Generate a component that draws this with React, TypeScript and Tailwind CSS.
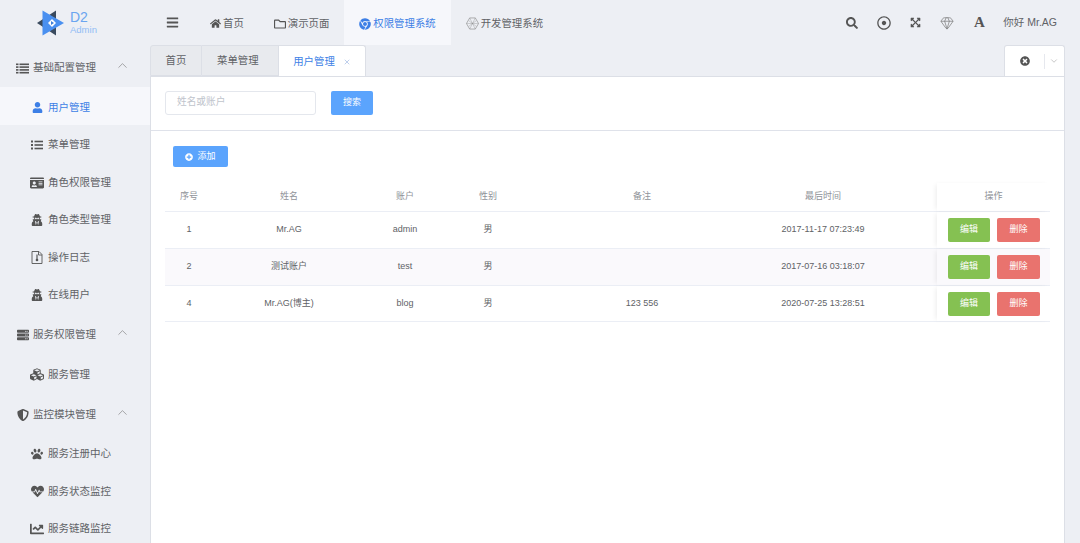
import { ChevronDown, ChevronUp, Gem, X } from "lucide-react"
import {
  FaBars,
  FaChartLine,
  FaChrome,
  FaCubes,
  FaExpandArrowsAlt,
  FaHeartbeat,
  FaHome,
  FaIdCard,
  FaPaw,
  FaPlusCircle,
  FaRegDotCircle,
  FaRegFolder,
  FaSearch,
  FaServer,
  FaShieldAlt,
  FaTimesCircle,
  FaUser,
  FaUserSecret,
} from "react-icons/fa"
import type { ReactNode } from "react"

const rowGrid = "grid grid-cols-[48px_152px_80px_86px_222px_140px_44px_113px] items-center text-center"

const rows = [
  { id: "1", name: "Mr.AG", account: "admin", sex: "男", note: "", time: "2017-11-17 07:23:49", h: "h-[37px]" },
  { id: "2", name: "测试账户", account: "test", sex: "男", note: "", time: "2017-07-16 03:18:07", h: "h-[37px] bg-[#faf9fc]" },
  { id: "4", name: "Mr.AG(博主)", account: "blog", sex: "男", note: "123 556", time: "2020-07-25 13:28:51", h: "h-[36px]" },
]

const Logo = () => (
  <div className="flex w-[150px] items-center gap-[5px] pl-[37px]">
    <svg width="28" height="26" viewBox="0 0 28 26">
      <path d="M0 13 L19 0.5 L19 25.5 Z" fill="#3a4a5e" />
      <path d="M5.5 0.5 L27 13 L5.5 25.5 Z" fill="#4a90f0" />
      <path d="M11 13 L15 9 L19 13 L15 17 Z" fill="#fff" />
      <path d="M14 11 L17 13 L14 15 Z" fill="#3f7fd8" />
    </svg>
    <div className="flex flex-col leading-none text-[#6aa5f0]">
      <span className="text-[14px] leading-[14px]">D2</span>
      <span className="text-[9.5px] leading-[12px] text-[#92bdf4]">Admin</span>
    </div>
  </div>
)

const DevIcon = () => (
  <svg width="13" height="13" viewBox="0 0 14 14" fill="none" stroke="#8a8a8a" strokeWidth="0.7">
    <path d="M4 1 H10 L13.5 7 L10 13 H4 L0.5 7 Z" />
    <path d="M4 1 L10 13 M10 1 L4 13 M0.5 7 H13.5 M3 4 L11 10 M11 4 L3 10" strokeWidth="0.4" />
  </svg>
)

const FileIcon = () => (
  <svg width="12" height="13" viewBox="0 0 12 13" fill="none" stroke="#555" strokeWidth="0.9">
    <path d="M1 0.5 H8 L11 3.5 V12.5 H1 Z" />
    <path d="M7.5 0.5 V4 H11" />
    <path d="M6 3.5 V8" strokeWidth="1.2" />
    <circle cx="6" cy="9" r="1.3" fill="#555" stroke="none" />
  </svg>
)

// four tight rows, the group heading list
const ThListIcon = () => (
  <svg width="13" height="11" viewBox="0 0 13 11" fill="#555">
    <rect x="0" y="0.5" width="2.5" height="1.6" />
    <rect x="3.5" y="0.5" width="9.5" height="1.6" />
    <rect x="0" y="3.3" width="2.5" height="1.6" />
    <rect x="3.5" y="3.3" width="9.5" height="1.6" />
    <rect x="0" y="6.1" width="2.5" height="1.6" />
    <rect x="3.5" y="6.1" width="9.5" height="1.6" />
    <rect x="0" y="8.9" width="2.5" height="1.6" />
    <rect x="3.5" y="8.9" width="9.5" height="1.6" />
  </svg>
)

const ListIcon = () => (
  <svg width="12" height="10" viewBox="0 0 12 10" fill="#555">
    <rect x="0" y="0.5" width="2" height="2" />
    <rect x="3.5" y="0.7" width="8.5" height="1.6" />
    <rect x="0" y="4" width="2" height="2" />
    <rect x="3.5" y="4.2" width="8.5" height="1.6" />
    <rect x="0" y="7.5" width="2" height="2" />
    <rect x="3.5" y="7.7" width="8.5" height="1.6" />
  </svg>
)

const TopItem = ({ icon, label, active }: { icon: ReactNode; label: string; active?: boolean }) => (
  <div
    className={`flex h-[45px] items-center gap-[2px] px-[15px] pt-[2px] text-[10.4px] ${
      active ? "bg-[#f6f7fb] text-[#3d7fe6]" : "text-[#606266]"
    }`}
  >
    {icon}
    <span>{label}</span>
  </div>
)

const Group = ({ icon, label, first }: { icon: ReactNode; label: string; first?: boolean }) => (
  <div
    className={`flex h-[40px] items-center pl-[16px] pr-[20px] pt-[2px] text-[10.5px] text-[#606266] ${
      first ? "" : "mt-[2px]"
    }`}
  >
    <span className="flex w-[13px] justify-center text-[#555]">{icon}</span>
    <span className="ml-[4px] flex-1">{label}</span>
    <ChevronUp size={15} strokeWidth={1} className="-mt-[5px] text-[#777]" />
  </div>
)

const Item = ({ icon, label, active }: { icon: ReactNode; label: string; active?: boolean }) => (
  <div
    className={`flex h-[37.5px] items-center pl-[30px] pt-[4px] text-[10.5px] ${
      active ? "bg-[#f6f7fb] text-[#3d7fe6]" : "text-[#606266]"
    }`}
  >
    <span className={`flex w-[14px] justify-center ${active ? "text-[#3d7fe6]" : "text-[#555]"}`}>{icon}</span>
    <span className="ml-[4px]">{label}</span>
  </div>
)

const Sidebar = () => (
  <aside className="w-[150px] shrink-0 pt-[2px]">
    <Group first icon={<ThListIcon />} label="基础配置管理" />
    <Item active icon={<FaUser size={11} />} label="用户管理" />
    <Item icon={<ListIcon />} label="菜单管理" />
    <Item icon={<FaIdCard size={14} />} label="角色权限管理" />
    <Item icon={<FaUserSecret size={12} />} label="角色类型管理" />
    <Item icon={<FileIcon />} label="操作日志" />
    <Item icon={<FaUserSecret size={12} />} label="在线用户" />
    <Group icon={<FaServer size={12} />} label="服务权限管理" />
    <Item icon={<FaCubes size={15} />} label="服务管理" />
    <Group icon={<FaShieldAlt size={12} />} label="监控模块管理" />
    <Item icon={<FaPaw size={12} />} label="服务注册中心" />
    <Item icon={<FaHeartbeat size={13} />} label="服务状态监控" />
    <Item icon={<FaChartLine size={14} />} label="服务链路监控" />
  </aside>
)

const Tabs = () => (
  <div className="flex h-[31px] text-[10.4px] text-[#606266]">
    <div className="flex h-[31px] w-[52px] items-center justify-center rounded-tl-[3px] border border-[#dcdfe6] bg-[#e8eaee] pt-[1px]">
      首页
    </div>
    <div className="flex h-[31px] w-[77px] items-center border-y border-r border-[#dcdfe6] bg-[#e8eaee] pl-[15px] pt-[1px]">
      菜单管理
    </div>
    <div className="flex h-[31px] w-[87px] items-center justify-center gap-[8px] rounded-tr-[3px] border-t border-r border-[#dcdfe6] bg-white pt-[1px] text-[#3d7fe6]">
      <span>用户管理</span>
      <X size={8} strokeWidth={1.5} className="text-[#7f9fd8]" />
    </div>
    <div className="ml-auto flex h-[31px] w-[61px] items-center rounded-t-[3px] border-x border-t border-[#dcdfe6] bg-white">
      <div className="flex h-[15px] w-[40px] items-center justify-center border-r border-[#e6e8ee] text-[#555]">
        <FaTimesCircle size={10} />
      </div>
      <ChevronDown size={10} strokeWidth={1} className="ml-[4px] text-[#777]" />
    </div>
  </div>
)

const Table = () => (
  <div className="ml-[14px] mt-[13px] w-[885px] text-[9px]">
    <div className={`${rowGrid} h-[32px] border-b border-[#ebeef5] pt-[3px] text-[#909399]`}>
      <div>序号</div>
      <div>姓名</div>
      <div>账户</div>
      <div>性别</div>
      <div>备注</div>
      <div>最后时间</div>
      <div />
      <div className="flex h-full items-center justify-center shadow-[-3px_0_5px_-2px_rgba(0,0,0,0.08)]">操作</div>
    </div>
    {rows.map((row) => (
      <div key={row.id} className={`${rowGrid} ${row.h} border-b border-[#ebeef5] text-[#606266]`}>
        <div>{row.id}</div>
        <div>{row.name}</div>
        <div>{row.account}</div>
        <div>{row.sex}</div>
        <div>{row.note}</div>
        <div>{row.time}</div>
        <div />
        <div className="flex h-full items-center gap-[7px] pl-[11px] shadow-[-3px_0_5px_-2px_rgba(0,0,0,0.08)]">
          <button className="h-[24px] w-[42px] rounded-[2px] bg-[#85c152] text-white">编辑</button>
          <button className="h-[24px] w-[43px] rounded-[2px] bg-[#e9736e] text-white">删除</button>
        </div>
      </div>
    ))}
  </div>
)

export default function App() {
  return (
    <div className="flex h-screen flex-col overflow-hidden bg-[#edeff4] font-['Liberation_Sans','Noto_Sans_CJK_SC',sans-serif]">
      <header className="flex h-[45px] shrink-0 items-center">
        <Logo />
        <div className="flex w-[45px] justify-center pr-[1px] text-[#555]">
          <FaBars size={13} />
        </div>
        <TopItem icon={<FaHome size={11} className="text-[#555]" />} label="首页" />
        <TopItem icon={<FaRegFolder size={12} className="text-[#555]" />} label="演示页面" />
        <TopItem active icon={<FaChrome size={12} className="text-[#3d7fe6]" />} label="权限管理系统" />
        <TopItem icon={<DevIcon />} label="开发管理系统" />
        <div className="ml-auto flex items-center text-[#555]">
          <span className="flex w-[32px] justify-center">
            <FaSearch size={12} />
          </span>
          <span className="flex w-[32px] justify-center">
            <FaRegDotCircle size={14} />
          </span>
          <span className="flex w-[31px] justify-center">
            <FaExpandArrowsAlt size={11} />
          </span>
          <span className="flex w-[32px] justify-center text-[#777]">
            <Gem size={14} strokeWidth={1.2} />
          </span>
          <span className="flex w-[32px] justify-center font-['Liberation_Serif',serif] text-[15px] font-bold leading-none">
            A
          </span>
        </div>
        <span className="ml-[8px] mr-[23px] text-[10.5px] text-[#606266]">你好 Mr.AG</span>
      </header>
      <div className="flex min-h-0 flex-1">
        <Sidebar />
        <main className="mr-[15px] flex min-w-0 flex-1 flex-col">
          <Tabs />
          <section className="flex-1 border-x border-t border-[#dcdfe6] bg-white">
            <div className="flex h-[54px] items-center gap-[15px] border-b border-[#dfe2ea] pb-[2px] pl-[14px]">
              <div className="flex h-[24px] w-[151px] items-center rounded-[3px] border border-[#e4e7ed] pl-[11px] text-[9.7px] text-[#c0c4cc]">
                姓名或账户
              </div>
              <button className="h-[24px] w-[42px] rounded-[2px] bg-[#5ba4fd] text-[9px] text-white">搜索</button>
            </div>
            <div className="pl-[7px] pt-[15px]">
              <button className="ml-[15px] flex h-[21px] w-[55px] items-center justify-center gap-[4px] rounded-[2px] bg-[#5ba4fd] text-[9px] text-white">
                <FaPlusCircle size={8} />
                <span>添加</span>
              </button>
            </div>
            <Table />
          </section>
        </main>
      </div>
    </div>
  )
}
